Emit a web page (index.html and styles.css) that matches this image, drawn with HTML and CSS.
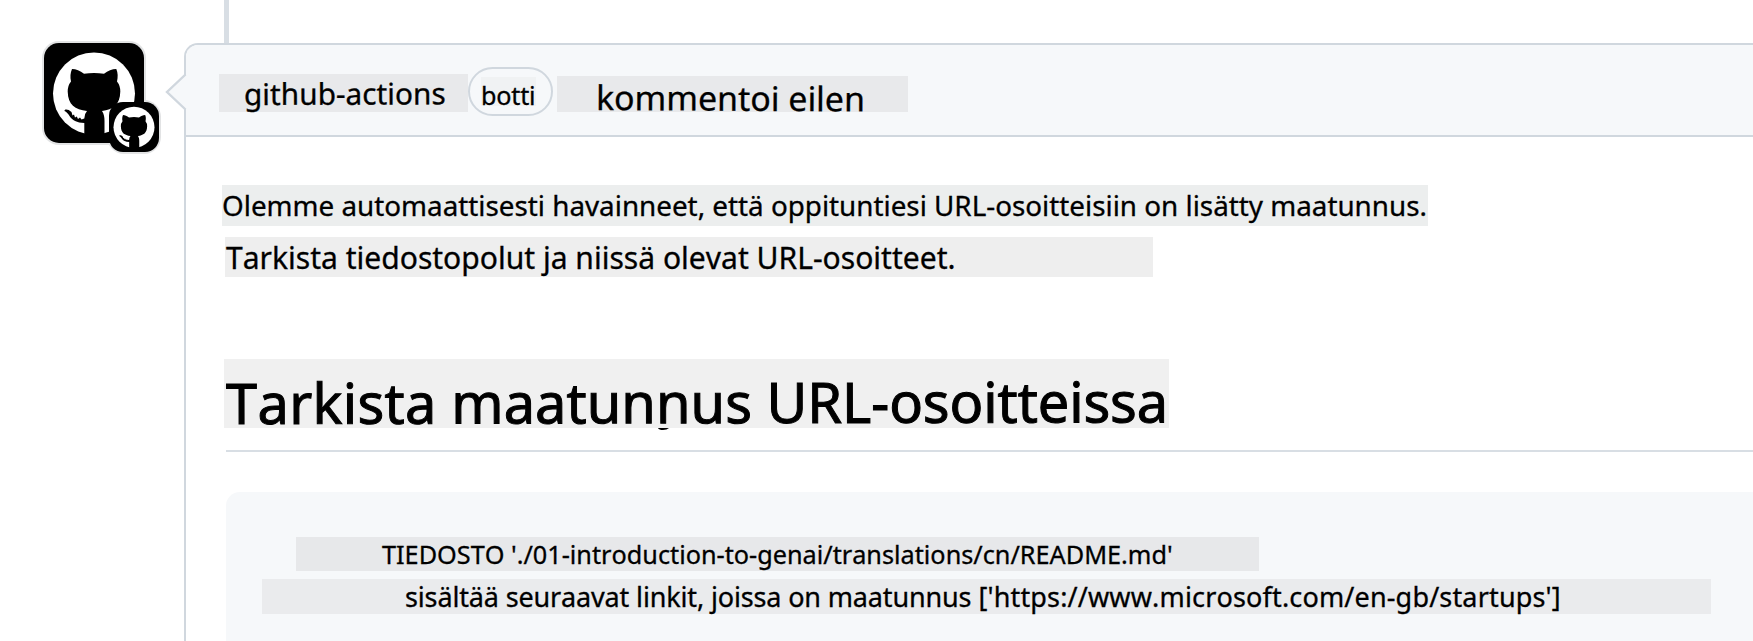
FILE: index.html
```
<!DOCTYPE html>
<html lang="fi">
<head>
<meta charset="utf-8">
<title>github-actions</title>
<link rel="stylesheet" href="styles.css">
</head>
<body>
<div class="timeline"></div>
<div class="item">
  <div class="avatars">
    <svg class="avatar" viewBox="0 0 100 100">
      <g id="cat">
        <circle cx="50" cy="50.5" r="41" fill="#fff"/>
        <path d="M28 26C32 26 36 28 40 30.8Q50 29 60 30.8C64 28 68 26 72.3 26C74 30 74 34 73 38.5Q76.3 42.5 76.3 48.5C76 62 69 66.5 58 68C60 71 60.5 74 60.5 78V93H40.3V80C33 80 28 77 25.500 73C24 70.500 22.500 69 20.500 68C20 66 24 65.500 27.500 69L28.500 72.500L30 71.500L31 74.500L32.800 73.500L34 76L36 74.500L37.500 76.500L40.300 75.500Q40.500 70.500 43 68C31 66.500 24 62 23.700 48.500Q23.700 42.500 27 38.500C26 34 26.300 30 28 26Z"/>
      </g>
    </svg>
    <svg class="avatar avatar-small" viewBox="0 0 100 100"><use href="#cat"/></svg>
  </div>
  <div class="comment">
    <svg class="caret" viewBox="0 0 22 38"><path d="M22 1L2 19L22 37Z" fill="#f6f8fa"/><path d="M20.500 1.500L2 19L20.500 36.500" fill="none" stroke="#d0d7de" stroke-width="2.400"/></svg>
    <div class="header">
      <span class="mark author"><span class="tilt">github-actions</span></span>
      <span class="pill"><span class="mark bot">botti</span></span>
      <span class="mark when"><span class="tilt">kommentoi eilen</span></span>
    </div>
    <div class="body">
      <p class="mark line-one">Olemme automaattisesti havainneet, että oppituntiesi URL-osoitteisiin on lisätty maatunnus.</p>
      <p class="mark line-two">Tarkista tiedostopolut ja niissä olevat URL-osoitteet.</p>
      <div class="title">
        <h1 class="mark"><span class="tilt"><span class="wide">Tarkista</span> maatunnus <span class="narrow">URL-osoitteissa</span></span></h1>
        <svg class="tail" viewBox="0 0 12 3"><path d="M0 0H11Q9 2 5 2Q1 2 0 0Z"/></svg>
      </div>
      <div class="code">
        <div class="mark code-one">TIEDOSTO './01-introduction-to-genai/translations/cn/README.md'</div>
        <div class="mark code-two"><span class="narrow">sisältää seuraavat linkit, joissa on maatunnus</span> <span class="link">['https://www.microsoft.com/en-gb/startups']</span></div>
      </div>
    </div>
  </div>
</div>
</body>
</html>
```
FILE: styles.css
```
* { box-sizing: border-box; }
body { margin: 0; height: 641px; overflow: hidden; background: #fff; color: #000; font-family: "Noto Sans", sans-serif; font-kerning: none; }
.timeline { width: 5px; height: 43px; margin-left: 224px; background: #d8dee4; }
.item { display: grid; grid-template-columns: 184px 1569px; height: 598px; }
.avatars { position: relative; z-index: 0; padding-left: 44px; }
.avatars::before { content: ""; position: absolute; z-index: -1; left: 107px; top: 57px; width: 54px; height: 54px; border-radius: 17px; background: #e2e3e4; }
.avatar { display: block; width: 100px; height: 100px; border-radius: 15px; background: #000; box-shadow: 0 0 0 2px #e2e3e4; }
.avatar-small { position: absolute; left: 109px; top: 59px; width: 50px; height: 50px; border-radius: 14px; box-shadow: none; }
.comment { position: relative; border: 2px solid #d0d7de; border-width: 2px 0 0 2px; border-radius: 14px 0 0 0; }
.caret { position: absolute; left: -21px; top: 28px; width: 22px; height: 38px; }
.header { display: flex; align-items: flex-start; height: 92px; padding: 22px 0 0 33px; background: #f6f8fa; border-bottom: 2px solid #d0d7de; border-radius: 12px 0 0 0; }
.mark { display: block; margin: 0; white-space: nowrap; font-weight: 400; -webkit-text-stroke: .3px #000; }
.tilt { display: block; transform-origin: 0 50%; }
.wide { letter-spacing: .28px; }
.narrow { letter-spacing: -.15px; }
.link { letter-spacing: .16px; }
.header .mark { background: #e8e9eb; }
.author { width: 249px; height: 38px; margin-top: 7px; padding-left: 25px; font-size: 29.800px; line-height: 39px; }
.author .tilt { transform: rotate(-.2deg); }
.pill { width: 85px; height: 49px; padding: 8px 0 0 11px; border: 2px solid #d0d7de; border-radius: 25px; }
.header .bot { width: 55px; height: 29px; padding-left: 0; background: #f0f2f3; font-size: 25.200px; line-height: 37px; letter-spacing: -.2px; }
.when { width: 351px; height: 36px; margin: 9px 0 0 4px; padding-left: 39px; font-size: 33.900px; line-height: 43px; }
.when .tilt { transform: rotate(.3deg); }
.body { padding: 48px 0 0 36px; }
.line-one { width: 1206px; height: 41px; padding-left: 0; background: #eceeee; font-size: 27.800px; line-height: 40px; }
.line-two { width: 928px; height: 40px; margin: 11px 0 0 3px; background: #eee; font-size: 30.050px; line-height: 41px; padding-left: 1px; }
.title { position: relative; height: 93px; margin: 82px 0 0 4px; border-bottom: 2px solid #d8dee4; }
h1.mark { width: 945px; height: 69px; margin-left: -2px; padding-left: 2px; background: #f0f0f0; font-size: 56px; line-height: 86px; -webkit-text-stroke: 1px #000; }
h1 .tilt { width: 940px; height: 69px; transform: rotate(-.1deg); }
.tail { position: absolute; left: 432px; top: 69px; width: 12px; height: 3px; }
.code { height: 160px; margin: 40px 0 0 4px; padding: 45px 0 0 36px; background: #f6f8fa; border-radius: 14px 0 0 0; }
.code-one { width: 963px; height: 34px; margin-left: 34px; padding-left: 86px; background: #e7e8ea; font-size: 25.250px; line-height: 34px; }
.code-two { width: 1449px; height: 35px; margin-top: 8px; padding-left: 143px; background: #eaebed; font-size: 27px; line-height: 36px; }
```
